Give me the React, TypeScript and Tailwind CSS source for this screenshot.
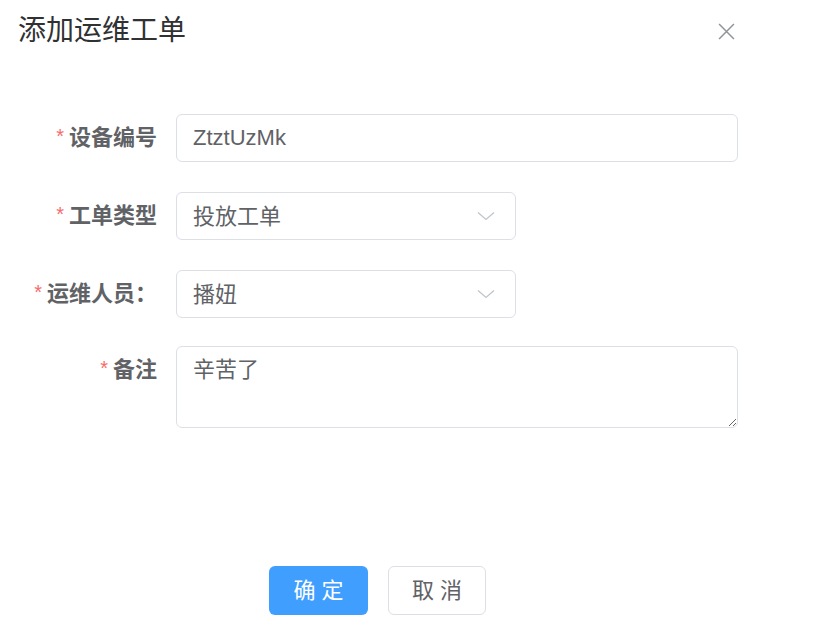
import React from "react";

const font = "font-['Liberation_Sans','Noto_Sans_CJK_SC',sans-serif]";

interface FieldProps {
  label: string;
  top?: boolean;
  children: React.ReactNode;
}

const Field = ({ label, top, children }: FieldProps) => {
  return (
    <div className={`flex ${top ? "items-start" : "items-center"}`}>
      <label className="w-[176px] shrink-0 pr-[19px] text-right text-[22px] leading-[48px] font-bold text-[#606266]">
        <span className="relative -top-[2px] mr-[5px] text-[20px] font-normal text-[#f56c6c]">*</span>
        {label}
      </label>
      {children}
    </div>
  );
};

const Chevron = () => (
  <svg width="18" height="10" viewBox="0 0 18 10" fill="none" className="shrink-0">
    <path d="M1 1.5 L9 8.5 L17 1.5" stroke="#c0c4cc" strokeWidth="1.3" />
  </svg>
);

const SelectBox = ({ value }: { value: string }) => (
  <div className="flex h-[48px] w-[340px] items-center justify-between rounded-[6px] border border-[#dcdfe6] bg-white pl-[16px] pr-[20px] text-[22px] text-[#606266]">
    <span>{value}</span>
    <Chevron />
  </div>
);

export default function App() {
  return (
    <div className={`${font} min-h-[623px] w-full bg-white`}>
      <div className="flex items-center justify-between pl-[18px] pr-[85px] pt-[12px]">
        <h2 className="text-[28px] leading-[38px] text-[#303133]">添加运维工单</h2>
        <svg width="17" height="17" viewBox="0 0 16 16" fill="none">
          <path d="M1 1 L15 15 M15 1 L1 15" stroke="#909399" strokeWidth="1.4" />
        </svg>
      </div>

      <form className="mt-[64px] flex flex-col gap-[30px]">
        <Field label="设备编号">
          <input
            readOnly
            value="ZtztUzMk"
            className="h-[48px] w-[562px] rounded-[6px] border border-[#dcdfe6] bg-white px-[16px] text-[22px] text-[#606266] outline-none"
          />
        </Field>
        <Field label="工单类型">
          <SelectBox value="投放工单" />
        </Field>
        <Field label="运维人员：">
          <SelectBox value="播妞" />
        </Field>
        <div className="-mt-[2px]">
          <Field label="备注" top>
            <textarea
              readOnly
              defaultValue="辛苦了"
              className="h-[82px] w-[562px] resize-y rounded-[6px] border border-[#dcdfe6] bg-white px-[16px] py-[8px] text-[22px] leading-[30px] text-[#606266] outline-none"
            />
          </Field>
        </div>
      </form>

      <div className="mt-[138px] flex gap-[20px] pl-[269px]">
        <button className="h-[49px] w-[99px] rounded-[6px] bg-[#409eff] text-[22px] text-white">
          确 定
        </button>
        <button className="h-[49px] w-[98px] rounded-[6px] border border-[#dcdfe6] bg-white text-[22px] text-[#606266]">
          取 消
        </button>
      </div>
    </div>
  );
}
